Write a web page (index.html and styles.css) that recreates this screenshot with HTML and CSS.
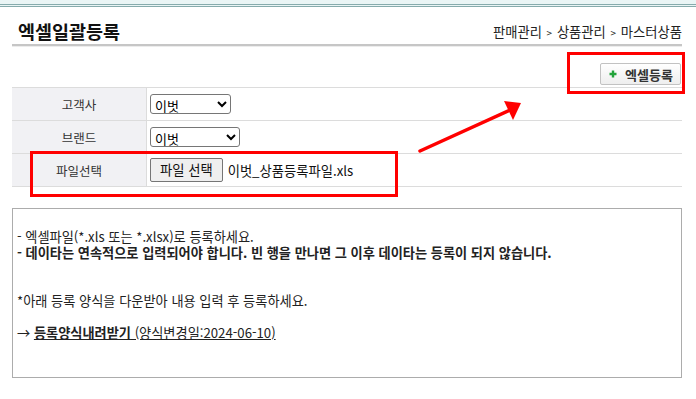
FILE: index.html
```html
<!DOCTYPE html>
<html lang="ko">
<head>
  <meta charset="UTF-8" />
  <title>엑셀일괄등록</title>
  <link rel="stylesheet" href="styles.css">
</head>
<body>
  <!-- 상단 라인 -->
  <div class="topbar"></div>

  <div class="wrap">
    <div class="title-row">
      <h2>엑셀일괄등록</h2>
      <div class="location">판매관리 <span class="gt">&gt;</span> 상품관리 <span class="gt">&gt;</span> 마스터상품</div>
    </div>

    <div class="btn-row">
      <button class="btn-excel">
        <svg class="ico-plus" width="8" height="8" viewBox="0 0 8 8"><path d="M4 0.5V7.5M0.5 4H7.5" stroke="#22a33a" stroke-width="2.4"/></svg>
        엑셀등록
      </button>
    </div>

    <table class="form-table">
      <tr>
        <th>고객사</th>
        <td>
          <select class="sel sel-cust"><option>이벗</option></select>
        </td>
      </tr>
      <tr>
        <th>브랜드</th>
        <td>
          <select class="sel sel-brand"><option>이벗</option></select>
        </td>
      </tr>
      <tr>
        <th>파일선택</th>
        <td>
          <span class="file-btn">파일 선택</span><span class="file-name">이벗_상품등록파일.xls</span>
        </td>
      </tr>
    </table>

    <div class="notice">
      <p>- 엑셀파일(*.xls 또는 *.xlsx)로 등록하세요.</p>
      <p class="strong">- 데이타는 연속적으로 입력되어야 합니다. 빈 행을 만나면 그 이후 데이타는 등록이 되지 않습니다.</p>
      <p>&nbsp;</p>
      <p>&nbsp;</p>
      <p>*아래 등록 양식을 다운받아 내용 입력 후 등록하세요.</p>
      <p>&nbsp;</p>
      <p>→ <a href="#" class="down"><b>등록양식내려받기</b> (양식변경일:2024-06-10)</a></p>
    </div>
  </div>

  <!-- 빨간 표시 -->
  <div class="mark mark-btn"></div>
  <div class="mark mark-file"></div>
  <svg class="mark-arrow" width="696" height="399" viewBox="0 0 696 399">
    <line x1="420" y1="151" x2="510" y2="110" stroke="#ff0000" stroke-width="3.5" stroke-linecap="round"/>
    <polygon points="504,101 521,103 513,120" fill="#ff0000"/>
  </svg>
</body>
</html>
```

FILE: styles.css
```css
body {
  margin: 0;
  font-family: "Noto Sans CJK KR", sans-serif;
  font-size: 13px;
  color: #222;
  background: #fff;
}
.topbar {
  height: 4px;
  background: #eaf5f5;
  border-bottom: 3px double #86abac;
}
.wrap {
  padding: 0 14px 0 12px;
}
.title-row {
  display: flex;
  justify-content: space-between;
  align-items: center;
  padding-top: 12px;
  border-bottom: 2px solid #c6c6c6;
  box-shadow: 0 1px 0 #ececec;
}
.title-row h2 {
  margin: 0;
  padding-left: 6px;
  font-size: 18.5px;
  line-height: 25px;
  color: #111;
}
.location {
  font-size: 13.3px;
  color: #222;
}
.gt {
  font-size: 10px;
  margin: 0 1px;
}
.btn-row {
  display: flex;
  justify-content: flex-end;
  margin-top: 17px;
  padding-right: 1px;
}
.btn-excel {
  display: flex;
  align-items: center;
  gap: 8px;
  height: 22px;
  width: 81px;
  padding: 0 0 0 8px;
  border: 1px solid #c2c2c2;
  border-radius: 2px;
  background: linear-gradient(#ffffff, #eeeeee);
  font-family: inherit;
  font-size: 13px;
  font-weight: bold;
  color: #333;
}
.form-table {
  width: 100%;
  margin-top: 2px;
  border-collapse: collapse;
  border-top: 1px solid #dcdcdc;
  border-bottom: 1px solid #dcdcdc;
}
.form-table th,
.form-table td {
  height: 32px;
  padding: 0;
  border-bottom: 1px solid #dcdcdc;
}
.form-table th {
  width: 134px;
  background: #f1f1f4;
  border-right: 1px solid #dcdcdc;
  font-size: 12.5px;
  font-weight: normal;
  color: #333;
}
.form-table td {
  padding-left: 3px;
}
.sel {
  height: 20px;
  font-family: inherit;
  font-size: 13px;
  border: 1px solid #767676;
  border-radius: 3px;
  background: #fff;
}
.sel-cust { width: 81px; }
.sel-brand { width: 90px; }
.file-btn {
  display: inline-block;
  height: 22px;
  line-height: 22px;
  padding: 0 9px;
  border: 1px solid #767676;
  border-radius: 2px;
  background: #efefef;
  font-size: 13.3px;
  color: #111;
  vertical-align: middle;
}
.file-name {
  margin-left: 5px;
  font-size: 13.3px;
  color: #111;
  vertical-align: middle;
}
.notice {
  box-sizing: border-box;
  height: 170px;
  margin-top: 21px;
  padding: 20px 4px 0;
  border: 1px solid #acacac;
}
.notice p {
  margin: 0;
  line-height: 16px;
  font-size: 13.2px;
  color: #222;
}
.notice .strong {
  font-weight: bold;
}
.down {
  color: #222;
}
.mark {
  position: absolute;
  border: 3px solid #ff0000;
  box-sizing: border-box;
}
.mark-btn {
  left: 567px;
  top: 52px;
  width: 118px;
  height: 42px;
}
.mark-file {
  left: 30px;
  top: 151px;
  width: 368px;
  height: 46px;
}
.mark-arrow {
  position: absolute;
  left: 0;
  top: 0;
  pointer-events: none;
}
```
